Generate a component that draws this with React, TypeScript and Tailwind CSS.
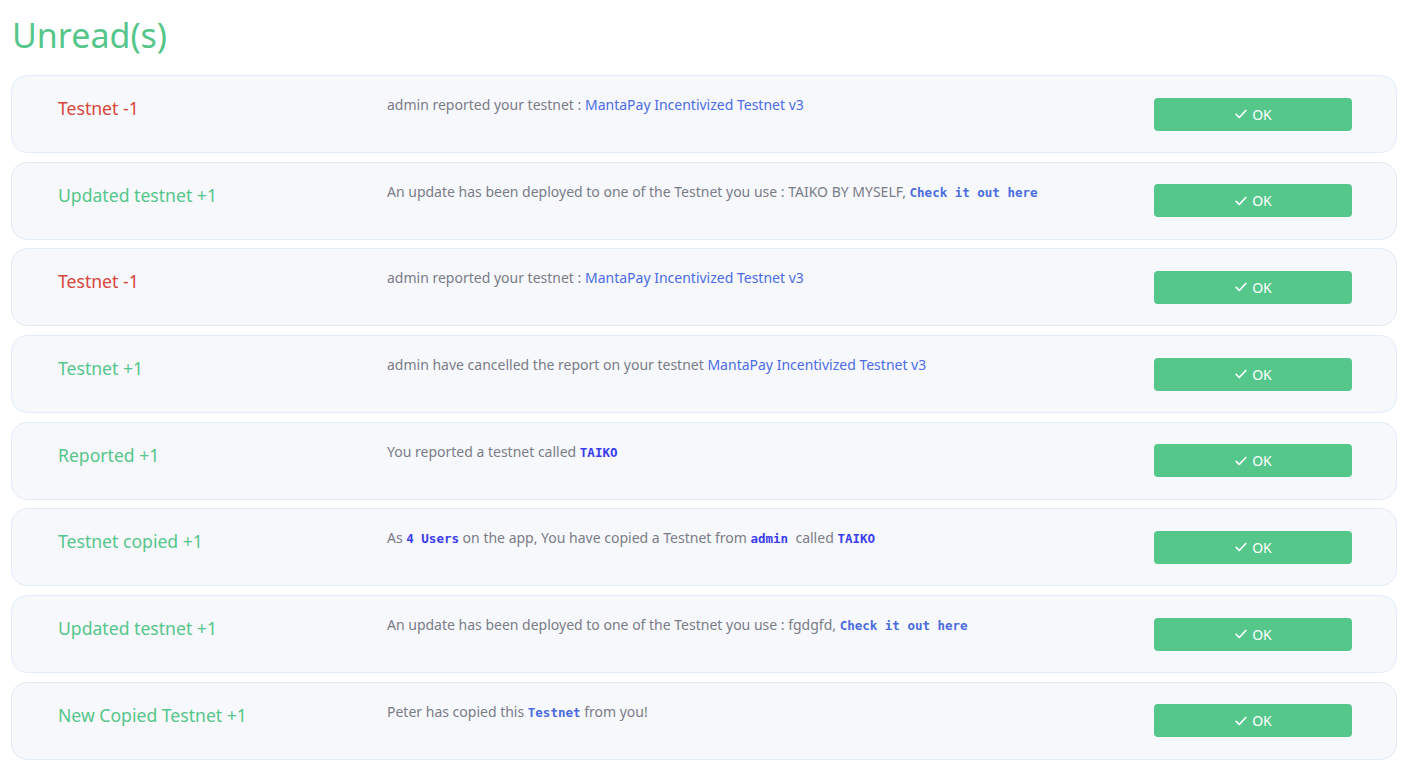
import React from "react";

type Part = { t: string; kind?: "link" | "code" | "codeLink" };

const notifications: { id: number; label: string; tone: "red" | "green"; parts: Part[] }[] = [
  {
    id: 1,
    label: "Testnet -1",
    tone: "red",
    parts: [
      { t: "admin reported your testnet : " },
      { t: "MantaPay Incentivized Testnet v3", kind: "link" },
    ],
  },
  {
    id: 2,
    label: "Updated testnet +1",
    tone: "green",
    parts: [
      { t: "An update has been deployed to one of the Testnet you use : TAIKO BY MYSELF, " },
      { t: "Check it out here", kind: "codeLink" },
    ],
  },
  {
    id: 3,
    label: "Testnet -1",
    tone: "red",
    parts: [
      { t: "admin reported your testnet : " },
      { t: "MantaPay Incentivized Testnet v3", kind: "link" },
    ],
  },
  {
    id: 4,
    label: "Testnet +1",
    tone: "green",
    parts: [
      { t: "admin have cancelled the report on your testnet " },
      { t: "MantaPay Incentivized Testnet v3", kind: "link" },
    ],
  },
  {
    id: 5,
    label: "Reported +1",
    tone: "green",
    parts: [{ t: "You reported a testnet called " }, { t: "TAIKO", kind: "code" }],
  },
  {
    id: 6,
    label: "Testnet copied +1",
    tone: "green",
    parts: [
      { t: "As " },
      { t: "4 Users", kind: "code" },
      { t: " on the app, You have copied a Testnet from " },
      { t: "admin", kind: "code" },
      { t: "  called " },
      { t: "TAIKO", kind: "code" },
    ],
  },
  {
    id: 7,
    label: "Updated testnet +1",
    tone: "green",
    parts: [
      { t: "An update has been deployed to one of the Testnet you use : fgdgfd, " },
      { t: "Check it out here", kind: "codeLink" },
    ],
  },
  {
    id: 8,
    label: "New Copied Testnet +1",
    tone: "green",
    parts: [
      { t: "Peter has copied this " },
      { t: "Testnet", kind: "codeLink" },
      { t: " from you!" },
    ],
  },
];

const CheckIcon = () => (
  <svg width="14" height="14" viewBox="0 0 16 16" fill="none" stroke="currentColor" strokeWidth="1.9" strokeLinecap="round" strokeLinejoin="round">
    <path d="M2.5 8.5l3.5 3.5 7.5-8" />
  </svg>
);

const renderPart = (p: Part, i: number) => {
  if (p.kind === "link") return <span key={i} className="text-[#4a6ce6]">{p.t}</span>;
  if (p.kind === "code")
    return (
      <code key={i} className="font-['DejaVu_Sans_Mono',monospace] font-bold text-[12.5px] text-[#3a3cf0] whitespace-pre">
        {p.t}
      </code>
    );
  if (p.kind === "codeLink")
    return (
      <code key={i} className="font-['DejaVu_Sans_Mono',monospace] font-bold text-[12.5px] text-[#4a6ce0] whitespace-pre">
        {p.t}
      </code>
    );
  return <span key={i} className="whitespace-pre">{p.t}</span>;
};

export default function App() {
  return (
    <div className="min-h-screen bg-white pl-[11px] pr-[10px] pt-[11px] font-['Noto_Sans',sans-serif]">
      <h1 className="text-[34px] leading-[48px] text-[#55c68a] ml-[1px] mb-[16px]">Unread(s)</h1>
      <div className="flex flex-col gap-[8.7px]">
        {notifications.map((n) => (
          <div
            key={n.id}
            className="h-[78px] rounded-[16px] border border-[#e2ecf8] bg-[#f7f8fc] flex items-start pl-[46px] pr-[44px]"
          >
            <div
              className={`w-[329px] shrink-0 pt-[18px] text-[17.6px] leading-[28px] ${
                n.tone === "red" ? "text-[#d8463b]" : "text-[#55c68a]"
              }`}
            >
              {n.label}
            </div>
            <div className="flex-1 pt-[18px] text-[14px] leading-[22px] text-[#7a7c87]">
              {n.parts.map(renderPart)}
            </div>
            <button className="self-center w-[198px] h-[33px] rounded-[4px] bg-[#55c78b] text-white text-[14px] flex items-center justify-center gap-[4px]">
              <CheckIcon />
              OK
            </button>
          </div>
        ))}
      </div>
    </div>
  );
}
